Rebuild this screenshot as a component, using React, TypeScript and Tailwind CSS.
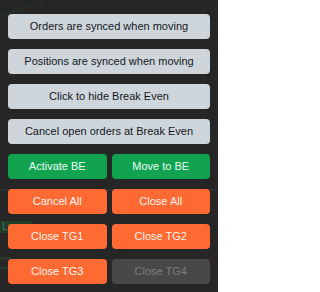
import React from 'react';

const wide = [
  'Orders are synced when moving',
  'Positions are synced when moving',
  'Click to hide Break Even',
  'Cancel open orders at Break Even',
];

const pairs: { label: string; cls: string }[][] = [
  [
    { label: 'Activate BE', cls: 'bg-[#12a350] text-[#e6fff6]' },
    { label: 'Move to BE', cls: 'bg-[#12a350] text-[#e6fff6]' },
  ],
  [
    { label: 'Cancel All', cls: 'bg-[#ff6a33] text-[#fff2ee]' },
    { label: 'Close All', cls: 'bg-[#ff6a33] text-[#fff2ee]' },
  ],
  [
    { label: 'Close TG1', cls: 'bg-[#ff6a33] text-[#fff2ee]' },
    { label: 'Close TG2', cls: 'bg-[#ff6a33] text-[#fff2ee]' },
  ],
  [
    { label: 'Close TG3', cls: 'bg-[#ff6a33] text-[#fff2ee]' },
    { label: 'Close TG4', cls: 'bg-[#484848] text-[#7c7c7c]' },
  ],
];

export default function App() {
  return (
    <div className="relative w-[218px] h-[292px] overflow-hidden bg-[#262626] font-['Liberation_Sans',Arial,sans-serif]">
      {/* faint chart behind the panel */}
      <svg className="absolute inset-0" width="218" height="292">
        <path d="M0 16 Q22 8 45 0" stroke="#213a28" strokeWidth="1" fill="none" />
        <line x1="0" y1="190" x2="218" y2="190" stroke="#2f3d33" strokeWidth="1" />
        <line x1="0" y1="260" x2="218" y2="260" stroke="#3b2b2b" strokeWidth="1" />
        <rect x="-2" y="258" width="12" height="10" fill="none" stroke="#2f4a36" strokeWidth="1" />
      </svg>
      <div className="absolute left-0 top-[221px] h-[12px] w-[32px] bg-[#233b2a] pl-[2px] text-[10px] leading-[12px] text-[#4c7a5a]">
        Lo
      </div>
      <div className="relative flex flex-col gap-[10px] px-2 pt-[14px]">
        {wide.map((t) => (
          <button
            key={t}
            className="h-[25px] w-full rounded-[4px] bg-[#cfd6db] text-[11px] text-[#131722]"
          >
            {t}
          </button>
        ))}
        {pairs.map((row, i) => (
          <div key={i} className="grid grid-cols-2 gap-[5px]">
            {row.map((b) => (
              <button key={b.label} className={`h-[25px] rounded-[4px] text-[11px] ${b.cls}`}>
                {b.label}
              </button>
            ))}
          </div>
        ))}
      </div>
    </div>
  );
}
